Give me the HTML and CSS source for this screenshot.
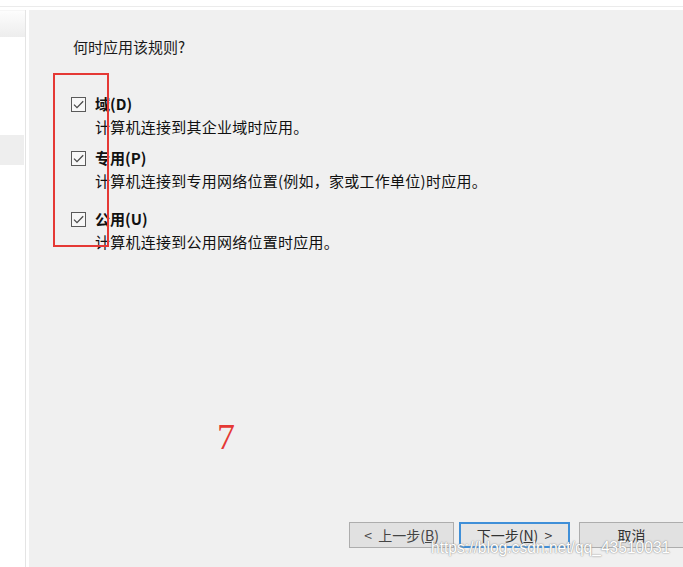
FILE: index.html
```html
<!DOCTYPE html>
<html lang="zh-CN">
<head>
<meta charset="utf-8">
<title>何时应用该规则</title>
<link rel="stylesheet" href="styles.css">
</head>
<body>
<div class="topbar"></div>
<div class="layout">
  <aside class="sidebar">
    <div class="side-item side-top"></div>
    <div class="side-item side-sel"></div>
  </aside>
  <main class="main">
    <div class="content">
      <div class="title">何时应用该规则?</div>
      <div class="opt opt1">
        <span class="cb"><svg width="15" height="15" viewBox="0 0 15 15"><rect x="0.5" y="0.5" width="14" height="14" fill="#f7f7f7" stroke="#5a5a5a"/><polyline points="3,7.6 6,10.6 12.2,4.2" fill="none" stroke="#4a4a4a" stroke-width="1.3"/></svg></span>
        <div class="opt-text">
          <div class="opt-label">域(D)</div>
          <div class="opt-desc">计算机连接到其企业域时应用。</div>
        </div>
      </div>
      <div class="opt opt2">
        <span class="cb"><svg width="15" height="15" viewBox="0 0 15 15"><rect x="0.5" y="0.5" width="14" height="14" fill="#f7f7f7" stroke="#5a5a5a"/><polyline points="3,7.6 6,10.6 12.2,4.2" fill="none" stroke="#4a4a4a" stroke-width="1.3"/></svg></span>
        <div class="opt-text">
          <div class="opt-label">专用(P)</div>
          <div class="opt-desc">计算机连接到专用网络位置(例如，家或工作单位)时应用。</div>
        </div>
      </div>
      <div class="opt opt3">
        <span class="cb"><svg width="15" height="15" viewBox="0 0 15 15"><rect x="0.5" y="0.5" width="14" height="14" fill="#f7f7f7" stroke="#5a5a5a"/><polyline points="3,7.6 6,10.6 12.2,4.2" fill="none" stroke="#4a4a4a" stroke-width="1.3"/></svg></span>
        <div class="opt-text">
          <div class="opt-label">公用(U)</div>
          <div class="opt-desc">计算机连接到公用网络位置时应用。</div>
        </div>
      </div>
    </div>
    <div class="footer">
      <button class="btn btn-back">&lt;&nbsp; 上一步(<u>B</u>)</button>
      <button class="btn btn-next">下一步(<u>N</u>) &nbsp;&gt;</button>
      <button class="btn btn-cancel">取消</button>
    </div>
  </main>
</div>
<div class="annot-rect"></div>
<div class="annot-num">7</div>
<div class="watermark">https://blog.csdn.net/qq_43510031</div>
</body>
</html>
```
FILE: styles.css
```css
html, body {
  margin: 0;
  padding: 0;
  background: #ffffff;
  width: 683px;
  height: 567px;
  overflow: hidden;
  font-family: "Noto Sans CJK SC", "Noto Sans", sans-serif;
  color: #111;
}

.topbar {
  height: 6px;
  border-bottom: 1px solid #ebebeb;
  margin-bottom: 3px;
}

.layout {
  display: flex;
  height: 557px;
}

.sidebar {
  width: 25px;
  border-right: 1px solid #e4e4e4;
  margin-right: 3px;
  display: flex;
  flex-direction: column;
}

.side-item {
  width: 25px;
}

.side-top {
  height: 27px;
  background: linear-gradient(#fdfdfd, #ededed);
  border-top: 1px solid #f6f6f6;
  box-sizing: border-box;
}

.side-sel {
  margin-top: 98px;
  height: 30px;
  width: 24px;
  background: #eeeeee;
}

.main {
  flex: 1;
  background: #f0f0f0;
  display: flex;
  flex-direction: column;
}

.content {
  padding: 27px 0 0 42px;
  font-size: 15px;
}

.title {
  line-height: 20px;
  padding-left: 2px;
  color: #1a1a1a;
  margin-bottom: 36px;
}

.opt {
  display: flex;
  align-items: flex-start;
}

.opt2 { margin-top: 9px; }
.opt3 { margin-top: 16px; }

.cb {
  width: 24px;
  height: 22px;
  display: flex;
  align-items: center;
  padding-top: 1px;
  box-sizing: border-box;
}

.cb svg { display: block; }

.opt-label {
  font-weight: bold;
  line-height: 22px;
  color: #111;
}

.opt-desc {
  line-height: 22px;
  margin-top: 1px;
  color: #111;
  letter-spacing: 0.25px;
}

.footer {
  margin-top: auto;
  display: flex;
  justify-content: flex-end;
  padding-bottom: 19px;
}

.btn {
  height: 26px;
  box-sizing: border-box;
  background: #e1e1e1;
  border: 1px solid #adadad;
  font-family: "Noto Sans CJK SC", "Noto Sans", sans-serif;
  font-size: 14px;
  color: #333;
  padding: 0;
  line-height: 22px;
}

.btn-back {
  width: 105px;
  margin-right: 5px;
  color: #444;
}

.btn-next {
  width: 111px;
  margin-right: 9px;
  border: 2px solid #3f8fd8;
  background: #e5e5e5;
}

.btn-cancel {
  width: 104px;
  border-right: none;
}

.annot-rect {
  position: absolute;
  left: 53px;
  top: 73px;
  width: 52px;
  height: 170px;
  border: 2px solid #e53935;
}

.annot-num {
  position: absolute;
  left: 217px;
  top: 419px;
  font-family: "Liberation Serif", serif;
  font-size: 36px;
  line-height: 36px;
  color: #e53935;
}

.watermark {
  position: absolute;
  left: 431px;
  top: 538px;
  font-family: "Liberation Sans", sans-serif;
  font-size: 15.6px;
  line-height: 20px;
  color: #ffffff;
  text-shadow: 0 0 1px #8a8a8a, 0 0 2px #a0a0a0;
  white-space: nowrap;
}
```
